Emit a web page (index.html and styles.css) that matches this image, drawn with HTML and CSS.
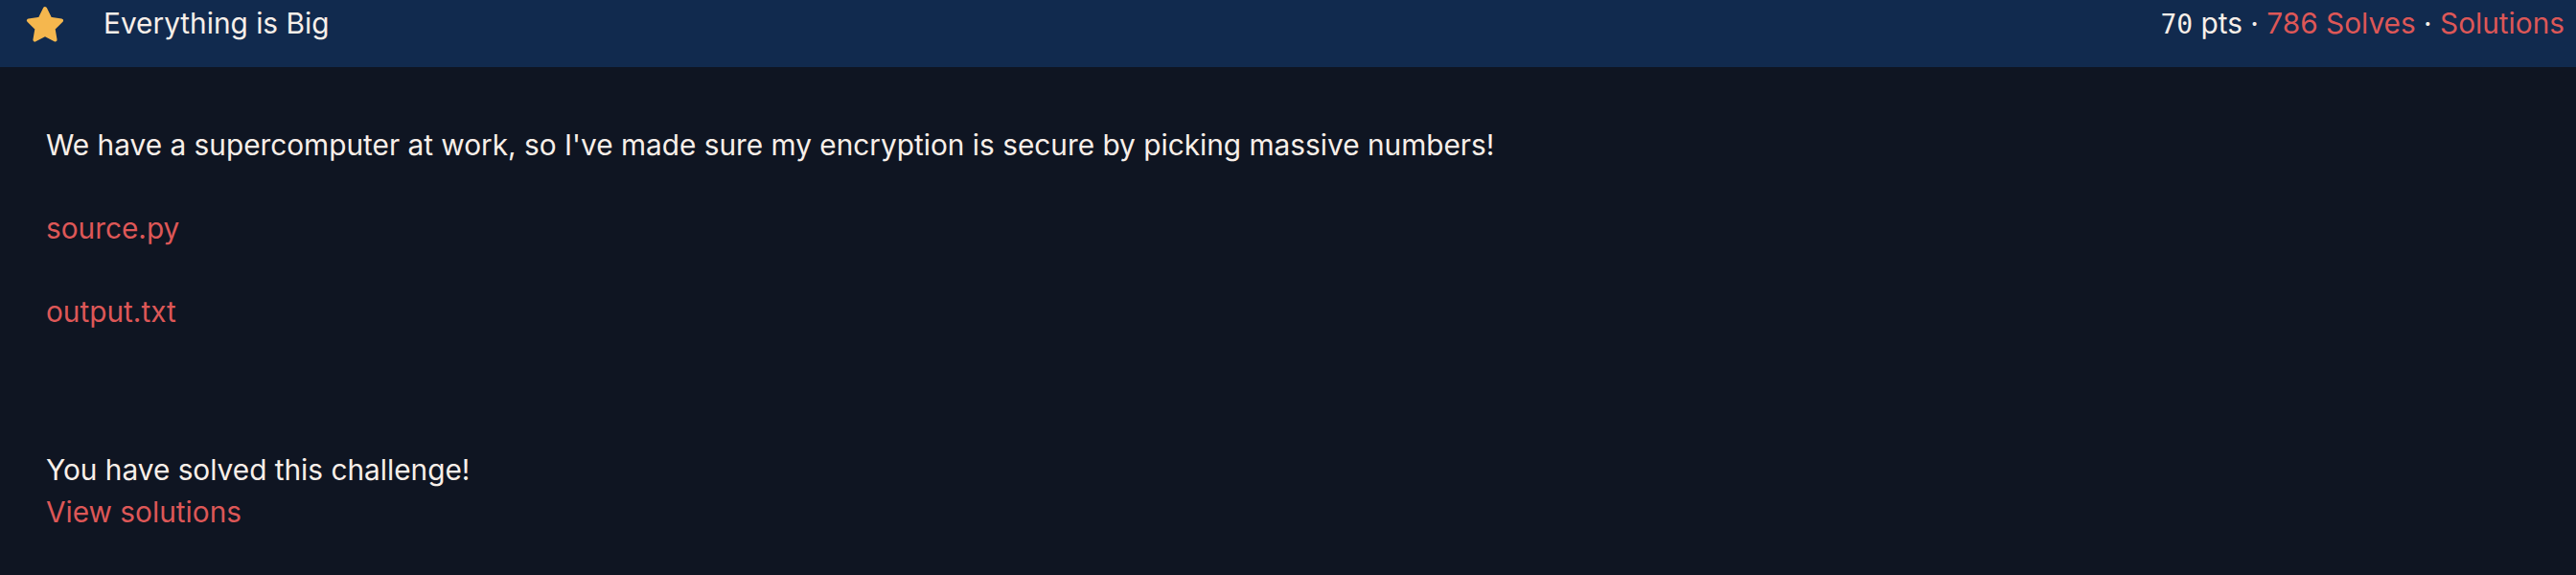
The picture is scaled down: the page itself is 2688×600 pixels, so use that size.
FILE: index.html
```html
<!DOCTYPE html>
<html lang="en">
<head>
  <meta charset="UTF-8">
  <meta name="viewport" content="width=device-width, initial-scale=1.0">
  <title>Everything is Big</title>
  <link rel="stylesheet" href="styles.css">
</head>
<body>
  <header class="challenge-bar">
    <div class="challenge-title">
      <svg class="star" width="42" height="40" viewBox="0 0 42 40" aria-hidden="true">
        <polygon points="21,4 26.29,14.72 38.12,16.44 29.56,24.78 31.58,36.56 21,31 10.42,36.56 12.44,24.78 3.88,16.44 15.71,14.72" />
      </svg>
      <span>Everything is Big</span>
    </div>
    <div class="challenge-meta">
      <span class="points">70</span> pts ·
      <a href="#">786 Solves</a> ·
      <a href="#">Solutions</a>
    </div>
  </header>

  <main class="challenge-body">
    <p>We have a supercomputer at work, so I've made sure my encryption is secure by picking massive numbers!</p>
    <p><a href="#">source.py</a></p>
    <p><a href="#">output.txt</a></p>

    <div class="solved">
      <div>You have solved this challenge!</div>
      <a href="#">View solutions</a>
    </div>
  </main>
</body>
</html>
```

FILE: styles.css
```css
body {
  margin: 0;
  font-family: Inter, "Noto Sans", sans-serif;
  font-size: 29.8px;
  line-height: 45px;
  background: #0f1522;
  color: #f8efe9;
}
a {
  color: #dd5757;
  text-decoration: none;
}
.challenge-bar {
  display: flex;
  justify-content: space-between;
  align-items: flex-start;
  height: 70px;
  box-sizing: border-box;
  padding: 2px 12px 0 26px;
  background: #112a4e;
}
.challenge-title {
  display: flex;
  align-items: flex-start;
  gap: 40px;
}
.star {
  margin-top: 3px;
}
.star polygon {
  fill: #f5b74e;
  stroke: #f5b74e;
  stroke-width: 4;
  stroke-linejoin: round;
}
.points {
  font-family: "DejaVu Sans Mono", "Liberation Mono", monospace;
  font-size: 28px;
  font-weight: 300;
}
.challenge-body {
  padding: 59px 48px 0;
}
.challenge-body p {
  margin: 0 0 42px;
}
.solved {
  margin-top: 120px;
  line-height: 44px;
}
```
